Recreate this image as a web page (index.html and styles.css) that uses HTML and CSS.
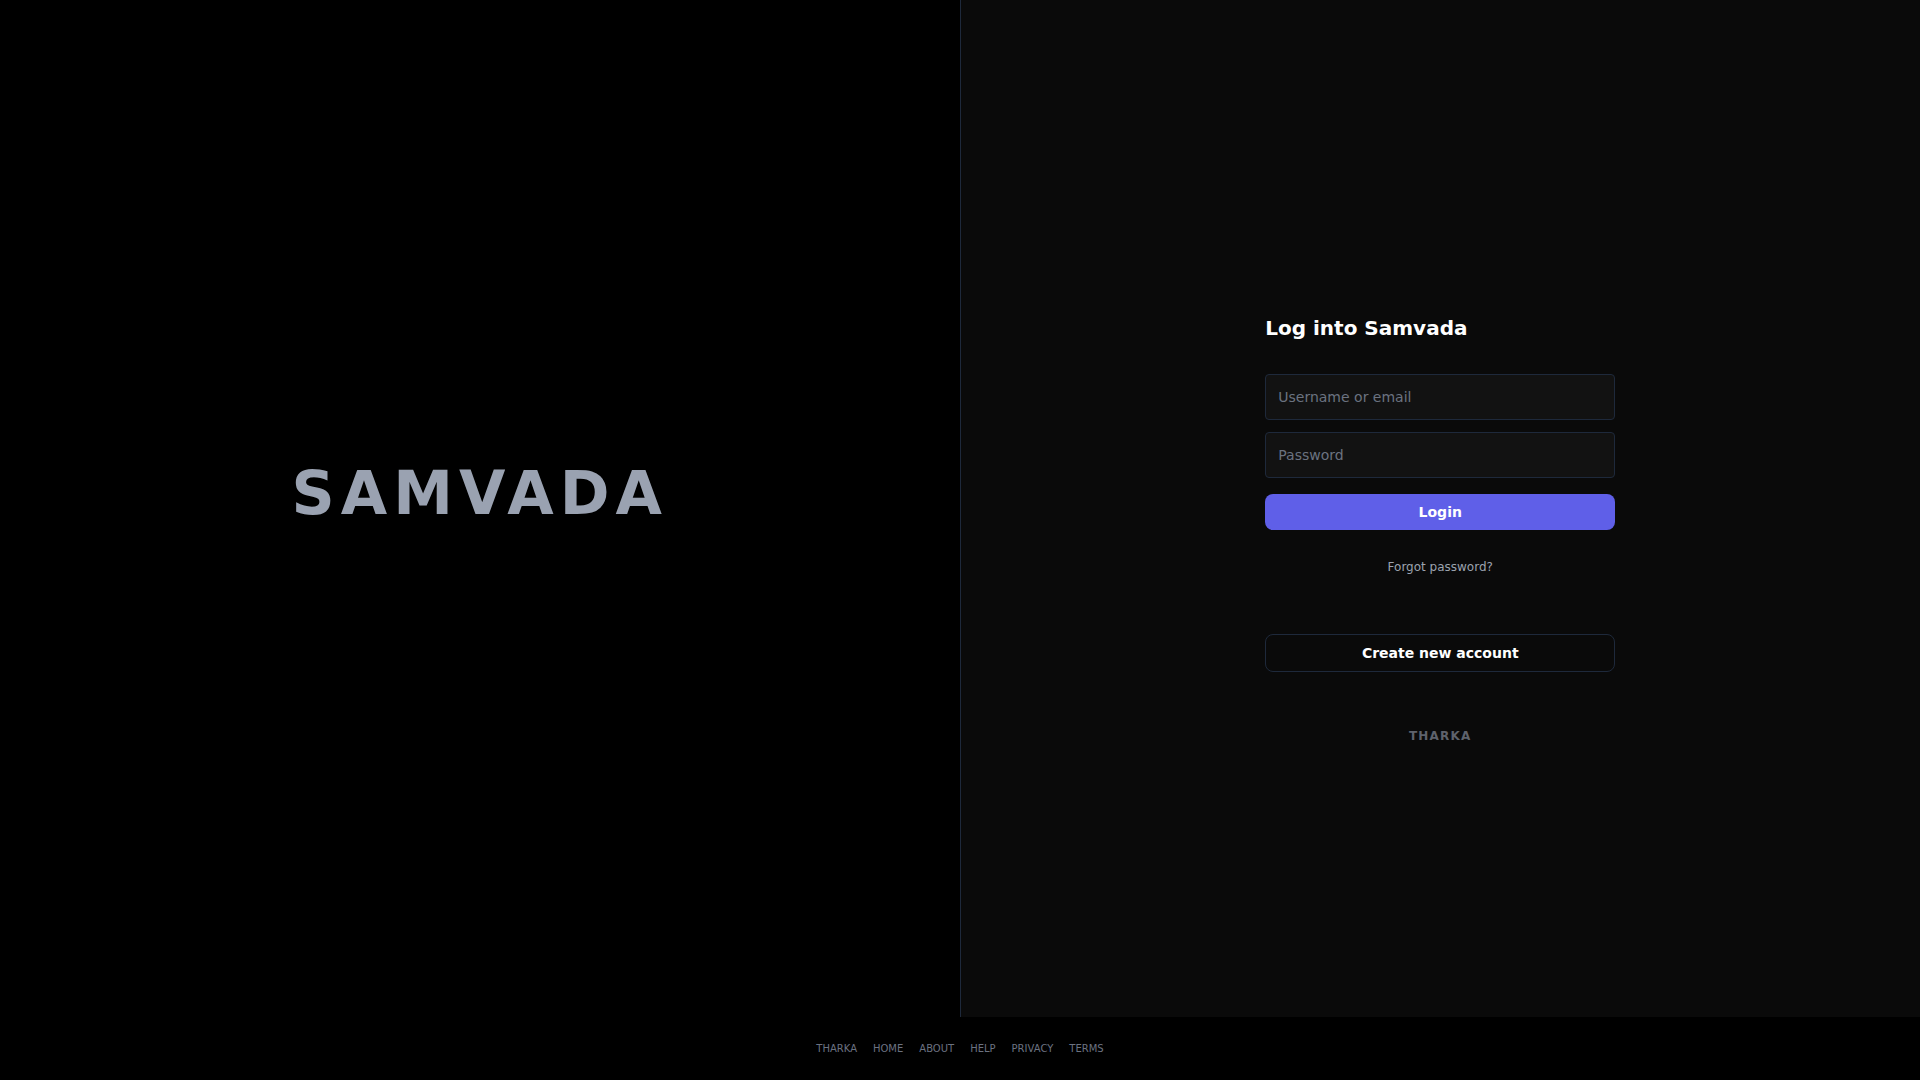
FILE: index.html
```html
<!DOCTYPE html>
<html lang="en">
<head>
  <meta charset="UTF-8">
  <meta name="viewport" content="width=device-width, initial-scale=1.0">
  <title>Samvada</title>
  <link rel="stylesheet" href="styles.css">
</head>
<body>
  <main class="container">
    <section class="left">
      <h1 class="brand">SAMVADA</h1>
    </section>
    <section class="right">
      <div class="login-box">
        <h2>Log into Samvada</h2>
        <form onsubmit="return false">
          <input type="text" placeholder="Username or email">
          <input type="password" placeholder="Password">
          <button type="submit" class="login-btn">Login</button>
        </form>
        <a href="#" class="forgot">Forgot password?</a>
        <button type="button" class="create-btn">Create new account</button>
        <div class="company">THARKA</div>
      </div>
    </section>
  </main>
  <footer>
    <a href="#">THARKA</a>
    <a href="#">HOME</a>
    <a href="#">ABOUT</a>
    <a href="#">HELP</a>
    <a href="#">PRIVACY</a>
    <a href="#">TERMS</a>
  </footer>
</body>
</html>
```

FILE: styles.css
```css
* {
  box-sizing: border-box;
  margin: 0;
  padding: 0;
}
body {
  height: 100vh;
  display: flex;
  flex-direction: column;
  background: #000;
  color: #fff;
  font-family: "DejaVu Sans", sans-serif;
  overflow: hidden;
}
.container {
  flex: 1;
  display: flex;
}
.left,
.right {
  flex: 1;
  display: flex;
  align-items: center;
  justify-content: center;
}
.left {
  padding-bottom: 32px;
}
.right {
  padding-top: 41px;
  background: #0a0a0a;
  border-left: 1px solid #1e293b;
}
.brand {
  font-size: 60px;
  line-height: 1;
  letter-spacing: 6px;
  color: #9aa2b1;
}
.login-box {
  width: 350px;
  display: flex;
  flex-direction: column;
}
.login-box h2 {
  font-size: 20px;
  line-height: 28px;
  margin-bottom: 32px;
}
form {
  display: flex;
  flex-direction: column;
  gap: 12px;
}
input {
  height: 46px;
  padding: 0 12px;
  background: #121212;
  border: 1px solid #1e293b;
  border-radius: 4px;
  color: #fff;
  font-family: inherit;
  font-size: 14px;
  outline: none;
}
input::placeholder {
  color: #6b7280;
}
button {
  font-family: inherit;
  font-size: 14px;
  font-weight: bold;
  line-height: 20px;
  color: #fff;
  border-radius: 8px;
  cursor: pointer;
}
.login-btn {
  height: 36px;
  margin-top: 4px;
  background: #5f5fe8;
  border: none;
}
.forgot {
  margin-top: 29px;
  align-self: center;
  font-size: 12px;
  line-height: 16px;
  color: #9ca3af;
  text-decoration: none;
}
.create-btn {
  height: 38px;
  margin-top: 59px;
  background: transparent;
  border: 1px solid #1e293b;
}
.company {
  margin-top: 56px;
  text-align: center;
  font-size: 12px;
  font-weight: bold;
  line-height: 16px;
  letter-spacing: 1.2px;
  color: #5e626c;
}
footer {
  height: 63px;
  display: flex;
  align-items: center;
  justify-content: center;
  gap: 16px;
}
footer a {
  font-size: 10px;
  line-height: 15px;
  color: #6b7280;
  text-decoration: none;
}
```
